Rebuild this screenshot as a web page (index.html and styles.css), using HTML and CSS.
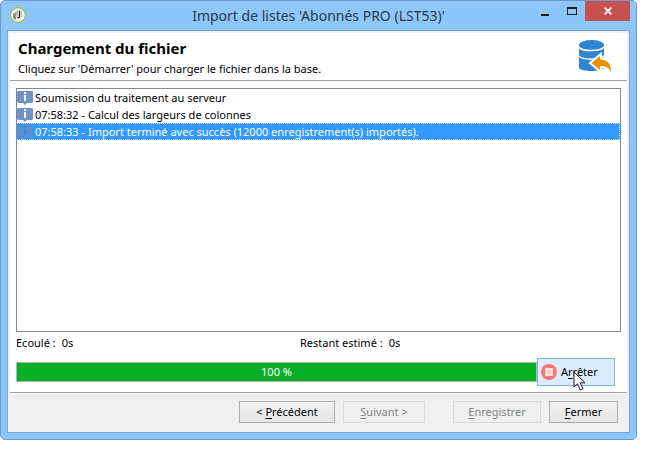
FILE: index.html
```
<!DOCTYPE html>
<html lang="fr">
<head>
<meta charset="utf-8">
<title>Import de listes</title>
<link rel="stylesheet" href="styles.css">
</head>
<body>
<div class="window">
  <header class="titlebar">
    <svg class="app-icon" width="16" height="16" viewBox="0 0 16 16" aria-hidden="true">
      <circle cx="8" cy="8" r="7.400" fill="#f4f7f4" stroke="#94c13c" stroke-width="1.100"/>
      <path d="M3 7 6 5v8l-3-1.500z" fill="#8a8f8c"/>
      <path d="M5.500 4.500 8 3v5l-1 4z" fill="#b5bab8"/>
      <path d="M9.500 3.500v6.500l-2 1" fill="none" stroke="#222" stroke-width="1.300"/>
      <path d="M11.500 4v6" stroke="#b5bab8"/>
    </svg>
    <h1 class="title">Import de listes 'Abonnés PRO (LST53)'</h1>
    <div class="controls">
      <button class="control" type="button" aria-label="Réduire"><svg width="8" height="10" viewBox="0 0 8 10"><path d="M0 8h8v2H0z" fill="#1e1e1e"/></svg></button>
      <button class="control" type="button" aria-label="Agrandir"><svg width="10" height="10" viewBox="0 0 10 10"><path fill-rule="evenodd" d="M0 1h10v8H0zM1 3v5h8V3z" fill="#1e1e1e"/></svg></button>
      <button class="control close" type="button" aria-label="Fermer la fenêtre"><svg width="8" height="8" viewBox="0 0 8 8"><path d="M.7.7l6.600 6.600M7.300.7.700 7.300" stroke="#fff" stroke-width="1.700"/></svg></button>
    </div>
  </header>
  <div class="client">
    <main class="page">
      <div class="banner">
        <div>
          <h2 class="heading">Chargement du fichier</h2>
          <p class="hint">Cliquez sur 'Démarrer' pour charger le fichier dans la base.</p>
        </div>
        <svg width="34" height="34" viewBox="0 0 34 34" aria-hidden="true">
          <path d="M1 6v23c2 4 22 4 25 0V6z" fill="#2f85d0"/>
          <ellipse cx="13.500" cy="6" rx="12.500" ry="5" fill="#2f85d0"/>
          <path d="M0 7c3 6 23 6 27 0M0 16c3 5.500 23 5.500 27 0" fill="none" stroke="#fff" stroke-width="1.500"/>
          <path d="M22 17v3.500c7 0 11 4 11 12-3-4.500-6-5.500-11-5.500v4l-8.500-7z" fill="#ef9100" stroke="#fff" stroke-width="4" paint-order="stroke"/>
        </svg>
      </div>
      <ul class="log">
        <li class="entry"><svg class="info" width="16" height="14" viewBox="0 0 16 14"><path class="bubble" d="M1 0h14l1 1v10l-1 1h-5l-2 2-2-2H1l-1-1V1z"/><path class="mark" d="M7 1h2v2H7zM7 4h2v6H7z"/></svg><span>Soumission du traitement au serveur</span></li>
        <li class="entry"><svg class="info" width="16" height="14" viewBox="0 0 16 14"><path class="bubble" d="M1 0h14l1 1v10l-1 1h-5l-2 2-2-2H1l-1-1V1z"/><path class="mark" d="M7 1h2v2H7zM7 4h2v6H7z"/></svg><span>07:58:32 - Calcul des largeurs de colonnes</span></li>
        <li class="entry selected"><svg class="info" width="16" height="14" viewBox="0 0 16 14"><path class="bubble" d="M1 0h14l1 1v10l-1 1h-5l-2 2-2-2H1l-1-1V1z"/><path class="mark" d="M7 1h2v2H7zM7 4h2v6H7z"/></svg><span>07:58:33 - Import terminé avec succès (12000 enregistrement(s) importés).</span></li>
      </ul>
      <dl class="times">
        <div class="time"><dt>Ecoulé :</dt><dd>0s</dd></div>
        <div class="time"><dt>Restant estimé :</dt><dd>0s</dd></div>
      </dl>
      <div class="run">
        <div class="progress" role="progressbar" aria-label="Chargement" aria-valuenow="100" aria-valuemin="0" aria-valuemax="100">100 %</div>
        <button class="stop" type="button">
          <svg width="16" height="16" viewBox="0 0 16 16" aria-hidden="true"><circle cx="8" cy="8" r="8" fill="#fa7774"/><path d="M5 5h6v6H5z" fill="#fbc4c6" stroke="#fff" stroke-width="1.500"/></svg>
          <span>A<u>r</u>rêter</span>
          <svg class="cursor" width="13" height="20" viewBox="0 0 13 20" aria-hidden="true"><path d="M1 1v15l3.500-3.300L7.300 19l2.700-1.200-2.800-6H12z" fill="#fff" stroke="#1c1c2c"/></svg>
        </button>
      </div>
    </main>
    <footer class="footer">
      <button class="button previous" type="button"><span>&lt; <u>P</u>récédent</span></button>
      <button class="button next" type="button" disabled><span><u>S</u>uivant &gt;</span></button>
      <button class="button save" type="button" disabled><span><u>E</u>nregistrer</span></button>
      <button class="button dismiss" type="button"><span><u>F</u>ermer</span></button>
    </footer>
  </div>
</div>
</body>
</html>
```
FILE: styles.css
```
* {
  box-sizing: border-box;
}

body {
  display: flex;
  min-height: 100vh;
  margin: 0;
  padding: 0 16px 15px 0;
  background: #fff;
  color: #000;
  font: 11px/16px "Noto Sans", "Open Sans", sans-serif;
}

h1, h2, p, ul, dl, dd {
  margin: 0;
  padding: 0;
}

button {
  font: inherit;
  color: inherit;
}

u {
  text-underline-offset: 2px;
}

.window {
  flex: 1;
  display: flex;
  flex-direction: column;
  padding: 0 6px 6px;
  border: 1px solid #6b9dca;
  border-radius: 5px;
  background: #8dc7fa;
}

.titlebar {
  display: flex;
  height: 29px;
}

.app-icon {
  margin: 6px 0 0 3px;
}

.title {
  flex: 1;
  padding-left: 80px;
  text-align: center;
  color: #2b3a4a;
  font-size: 14px;
  font-weight: 400;
  line-height: 29px;
}

.controls {
  display: flex;
  height: 20px;
}

.control {
  display: flex;
  align-items: center;
  justify-content: center;
  width: 27px;
  padding: 0;
  border: 0;
  background: none;
}

.close {
  width: 45px;
  background: #c75050;
}

.client {
  flex: 1;
  display: flex;
  flex-direction: column;
  border: 1px solid #6fa8dc;
  background: #f0f0f0;
}

.page {
  flex: 1;
  display: flex;
  flex-direction: column;
  margin: 2px 2px 0;
  border-bottom: 1px solid #a0a0a0;
  background: #fff;
}

.banner {
  display: flex;
  justify-content: space-between;
  height: 48px;
  padding: 6px 15px 0 8px;
  border-bottom: 1px solid #a0a0a0;
}

.heading {
  font-size: 15px;
  line-height: 18px;
}

.hint {
  line-height: 24px;
}

.log {
  flex: 1;
  margin: 7px 6px 0;
  border: 1px solid #828790;
  list-style: none;
}

.entry {
  display: flex;
  align-items: center;
  gap: 2px;
  height: 17px;
  border: 1px solid transparent;
  border-left-width: 0;
}

.selected {
  background: #3399ff;
  border: 1px dotted #d8ecff;
  border-left-width: 0;
  color: #fff;
}

.bubble {
  fill: #7092c6;
}

.mark {
  fill: #fff;
}

.selected .bubble {
  fill: #548fd6;
}

.selected .mark {
  fill: #3c86dc;
}

.times {
  display: grid;
  grid-template-columns: 284fr 321fr;
  margin: 3px 6px 0;
}

.time {
  display: flex;
  gap: 6px;
}

.run {
  display: flex;
  align-items: center;
  margin: 7px 12px 6px 6px;
}

.progress {
  flex: 1;
  border: 1px solid #b4b4b4;
  background: #06b025;
  color: #fff;
  line-height: 18px;
  text-align: center;
}

.stop {
  position: relative;
  display: flex;
  align-items: center;
  gap: 4px;
  width: 78px;
  height: 28px;
  padding: 0 3px;
  border: 1px solid #7eb4ea;
  background: #dcecfd;
}

.cursor {
  position: absolute;
  top: 12px;
  left: 35px;
}

.footer {
  display: flex;
  justify-content: flex-end;
  gap: 8px;
  padding: 7px 11px 9px;
  border-top: 1px solid #fff;
}

.button {
  height: 22px;
  padding: 0;
  border: 1px solid #acacac;
  background: linear-gradient(#f2f2f2, #e5e5e5);
}

.button:disabled {
  border-color: #d9d9d9;
  background: #efefef;
  color: #838383;
}

.previous {
  width: 96px;
}

.next {
  width: 82px;
}

.save {
  width: 88px;
  margin-left: 20px;
}

.dismiss {
  width: 69px;
}
```
